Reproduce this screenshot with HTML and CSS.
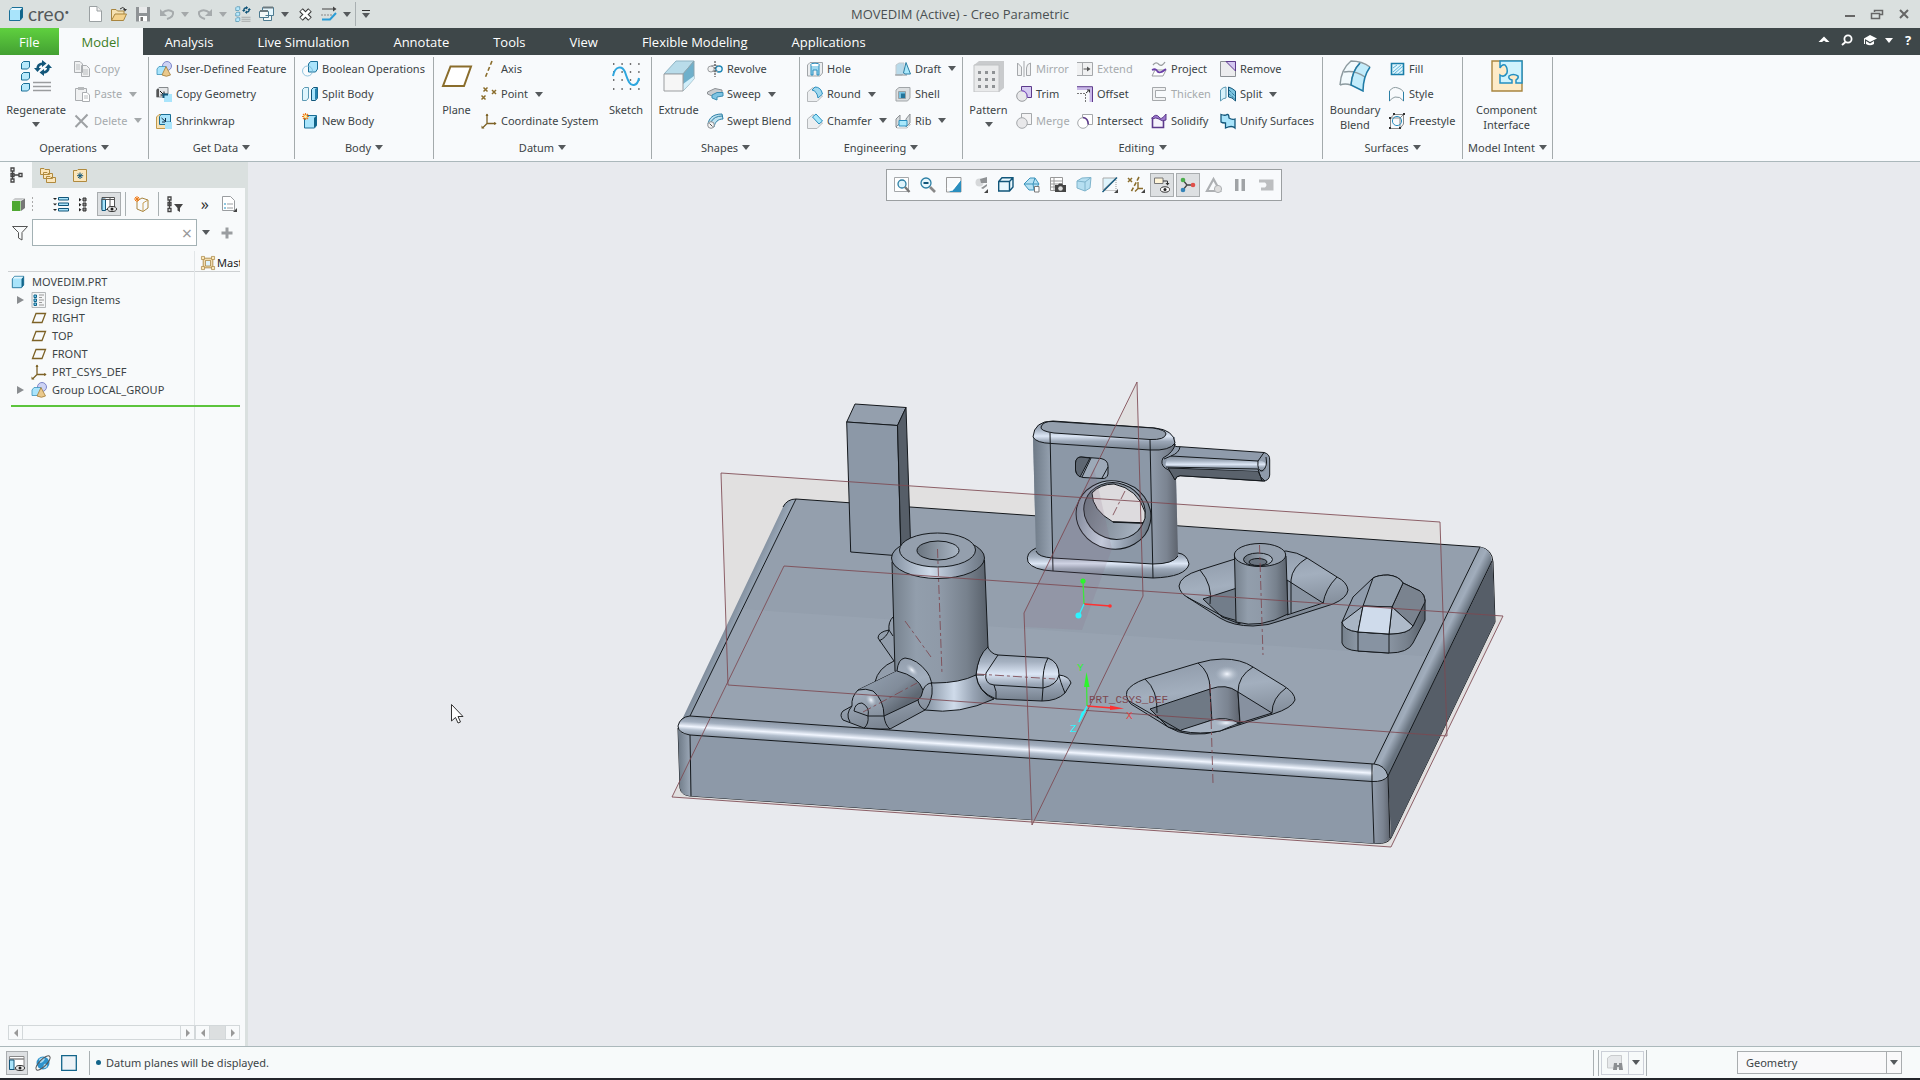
FILE: index.html
```html
<!DOCTYPE html>
<html lang="en">
<head>
<meta charset="utf-8">
<title>MOVEDIM (Active) - Creo Parametric</title>
<link rel="stylesheet" href="styles.css">
</head>
<body>
<svg class="sprite" aria-hidden="true">
  <defs>
    <linearGradient id="blue" x1="0" y1="0" x2="1" y2="1"><stop offset="0" stop-color="#f4fcff"/><stop offset="1" stop-color="#79cdf0"/></linearGradient>
    <linearGradient id="gold" x1="0" y1="0" x2="1" y2="1"><stop offset="0" stop-color="#fff3d6"/><stop offset="1" stop-color="#ecc680"/></linearGradient>
    <linearGradient id="grey" x1="0" y1="0" x2="1" y2="1"><stop offset="0" stop-color="#fafafa"/><stop offset="1" stop-color="#b4b7ba"/></linearGradient>
    <radialGradient id="ball" cx=".35" cy=".3" r=".8"><stop offset="0" stop-color="#fff"/><stop offset="1" stop-color="#5bb9e6"/></radialGradient>
  </defs>
  <symbol id="cube" viewBox="0 0 16 16"><path d="M1.500 4.500L4 1.500H14.500V11.500L12 14.500H1.500Z" fill="#a9e4fb" stroke="#1a6f97"/><path d="M12 14.500V4.500L14.500 1.500V11.500Z" fill="#12658a"/><path d="M2 4L4.200 2H14L12 4Z" fill="#e6f8ff"/></symbol>
  <symbol id="plane" viewBox="0 0 16 16"><path d="M5 3.500H14.500L11 12.500H1.500Z" fill="none" stroke="#7d6226" stroke-width="1.300"/></symbol>
  <symbol id="csys" viewBox="0 0 16 16"><path d="M6 1V10.500H15M6 10.500L1.500 15" fill="none" stroke="#7d6226" stroke-width="1.300"/><path d="M4.500 3L6 0.500L7.500 3ZM13 9L15.700 10.500L13 12ZM0.500 12.500V15.500H3.500Z" fill="#7d6226"/></symbol>
  <symbol id="group" viewBox="0 0 16 16"><circle cx="11" cy="5" r="4.500" fill="#cdd3f4" stroke="#7c86c8"/><path d="M1 8L3 5.500H10V12L8 13.500H1Z" fill="#a9e4fb" stroke="#3b93bb" stroke-width=".8"/><path d="M10 5.500L14.500 14Q10.500 16.500 6 14Z" fill="#eac98c" stroke="#a27c37" stroke-width=".8"/></symbol>
  <symbol id="regen" viewBox="0 0 32 32"><path d="M1.500 3.500L3.500 1.500H9.500V7L7.500 9H1.500ZM1.500 14.500L3.500 12.500H9.500V18L7.500 20H1.500ZM1.500 25.500L3.500 23.500H9.500V29L7.500 31H1.500Z" fill="#b8e9fc" stroke="#1a6f97"/><path d="M13 22.500H31M13 26.500H31M13 30.500H31" stroke="#9a9c9e" stroke-width="1.600"/><path d="M17.500 9Q17.500 4 23 3.500M28.500 7Q28.500 12 23 12.500" fill="none" stroke="#12567a" stroke-width="2.600"/><path d="M22 0L26.500 3.500L22 7ZM24 9L19.500 12.500L24 16ZM14 8H21L17.500 12ZM25 8H32L28.500 4Z" fill="#12567a"/></symbol>
</svg>

<header class="titlebar">
  <svg class="i" viewBox="0 0 16 16"><use href="#cube"/></svg>
  <span class="brand">creo<sup>•</sup></span>
  <nav class="quick" aria-label="Quick access">
    <button aria-label="New"><svg class="i" viewBox="0 0 16 16"><path d="M2.500 .5H10L14.500 5V15.500H2.500Z" fill="#fff" stroke="#9aa0a2"/><path d="M10 .5V5H14.500" fill="#eee" stroke="#9aa0a2"/></svg></button>
    <button aria-label="Open"><svg class="i" viewBox="0 0 16 16"><path d="M.5 14.500V3.500H5L6.500 5H13V8" fill="#f6e2b2" stroke="#a8853f"/><path d="M.5 14.500L4 8H15.500L12.500 14.500Z" fill="#f4d28c" stroke="#a8853f"/><path d="M9 3Q12 0 14 3" fill="none" stroke="#333"/><path d="M12 3H16L14 5.500Z" fill="#333"/></svg></button>
    <button aria-label="Save"><svg class="i" viewBox="0 0 16 16"><path d="M1 1H15V15.500H1Z" fill="#8f9396"/><path d="M4 1H12V7H4Z" fill="#e9eaeb"/><path d="M4 10H12V15.500H4Z" fill="#fff"/><path d="M5.500 11H8V15H5.500Z" fill="#777"/></svg></button>
    <button aria-label="Undo" disabled><svg class="i" viewBox="0 0 16 16"><path d="M3 7Q9 2 14 6Q15 11 8 13" fill="none" stroke="#a6abad" stroke-width="2"/><path d="M1 3V10H8Z" fill="#a6abad"/></svg></button>
    <button class="drop off" aria-label="Undo list"></button>
    <button aria-label="Redo" disabled><svg class="i" viewBox="0 0 16 16"><path d="M13 7Q7 2 2 6Q1 11 8 13" fill="none" stroke="#a6abad" stroke-width="2"/><path d="M15 3V10H8Z" fill="#a6abad"/></svg></button>
    <button class="drop off" aria-label="Redo list"></button>
    <button aria-label="Regenerate"><svg class="i" viewBox="0 0 32 32"><use href="#regen"/></svg></button>
    <button aria-label="Windows"><svg class="i" viewBox="0 0 16 16"><path d="M3.500 1.500H14.500V9.500H3.500Z" fill="#e4f5fc" stroke="#4c7a90"/><path d="M.5 5.500H9.500V11.500H.5ZM6.500 9.500H12.500V14.500H4.500V11.500" fill="#f3f7f8" stroke="#4c7a90"/><path d="M1 5H9M4 1.500H14" stroke="#6d7a80" stroke-width="2"/></svg></button>
    <button class="drop" aria-label="Windows list"></button>
    <button aria-label="Close window"><svg class="i" viewBox="0 0 16 16"><path d="M4 4L13 13M13 4L4 13" stroke="#333" stroke-width="5"/><path d="M4.500 4.500L12.500 12.500M12.500 4.500L4.500 12.500" stroke="#fff" stroke-width="3"/></svg></button>
    <button aria-label="Mapkeys"><svg class="i" viewBox="0 0 16 16"><path d="M1 3H14" stroke="#444"/><path d="M12 .5V5.500L15.500 3Z" fill="#444"/><path d="M0 9H11" stroke="#888" stroke-dasharray="2 1"/><path d="M1 13.500H9L15 7" fill="none" stroke="#2b9cd6" stroke-width="2"/></svg></button>
    <button class="drop" aria-label="Mapkeys list"></button>
    <span class="vbar"></span>
    <button class="drop more" aria-label="Customize"></button>
  </nav>
  <h1>MOVEDIM (Active) - Creo Parametric</h1>
  <div class="winctl">
    <button aria-label="Minimize"><svg class="i" viewBox="0 0 16 16"><path d="M3 10H13" stroke="#666" stroke-width="2"/></svg></button>
    <button aria-label="Restore"><svg class="i" viewBox="0 0 16 16"><path d="M5.500 6V4.500H13.500V8.500H10M2.500 7.500H10.500V12.500H2.500Z" fill="none" stroke="#666" stroke-width="1.500"/></svg></button>
    <button aria-label="Close"><svg class="i" viewBox="0 0 16 16"><path d="M4 4L12 12M12 4L4 12" stroke="#666" stroke-width="2"/></svg></button>
  </div>
</header>

<nav class="tabs">
  <a class="file" href="#file">File</a><a class="active" href="#model">Model</a><a href="#analysis">Analysis</a><a href="#sim">Live Simulation</a><a href="#annotate">Annotate</a><a href="#tools">Tools</a><a href="#view">View</a><a href="#flex">Flexible Modeling</a><a href="#apps">Applications</a>
  <div class="tabtools">
    <button aria-label="Collapse ribbon"><svg class="i" viewBox="0 0 16 16"><path d="M2.500 10L8 4.500L13.500 10H10L8 8.500L6 10Z" fill="#fff"/></svg></button>
    <button aria-label="Search"><svg class="i" viewBox="0 0 16 16"><circle cx="9" cy="7" r="3.600" fill="none" stroke="#fff" stroke-width="1.800"/><path d="M6.500 10L3 13" stroke="#fff" stroke-width="2"/></svg></button>
    <button aria-label="Learning"><svg class="i" viewBox="0 0 16 16"><path d="M8 3L15 6.500L8 10L2 6.500Z" fill="#fff"/><path d="M4 9V12Q8 14.500 12 12V9L8 11.500Z" fill="#fff"/><path d="M2.500 6.500V12" stroke="#fff"/></svg></button>
    <button class="drop light" aria-label="Learning list"></button>
    <button class="help" aria-label="Help">?</button>
  </div>
</nav>

<section class="ribbon">
  <div class="grp ops">
    <div class="cols">
      <button class="big"><svg viewBox="0 0 32 32"><use href="#regen"/></svg>Regenerate<i class="dd"></i></button>
      <div class="col">
        <button class="cmd" disabled><svg class="i" viewBox="0 0 16 16"><path d="M.5 .5H6L8.500 3V11.500H.5ZM7.500 4.500H12.500L15.500 7.500V15.500H7.500Z" fill="#f0f1f2" stroke="#aaadb0"/><path d="M2 4H6M2 6H6M2 8H6M9 9H14M9 11H14M9 13H14" stroke="#b9bcbe"/></svg>Copy</button>
        <button class="cmd" disabled><svg class="i" viewBox="0 0 16 16"><path d="M1.500 2.500H12.500V14.500H1.500Z" fill="#f0f1f2" stroke="#aaadb0"/><path d="M4 1H10V4H4Z" fill="#b7babc"/><path d="M8.500 6.500H13L15.500 9V15.500H8.500Z" fill="#fff" stroke="#aaadb0"/><path d="M10 10H14M10 12H14" stroke="#b9bcbe"/></svg>Paste<i class="dd"></i></button>
        <button class="cmd" disabled><svg class="i" viewBox="0 0 16 16"><path d="M1.500 2.500L13.500 14.500M13.500 1.500L1.500 14" stroke="#9ea1a4" stroke-width="2"/></svg>Delete<i class="dd"></i></button>
      </div>
    </div>
    <button class="title">Operations<i class="dd"></i></button>
  </div>
  <div class="grp get">
    <div class="cols">
      <div class="col">
        <button class="cmd"><svg class="i" viewBox="0 0 16 16"><use href="#group"/></svg>User-Defined Feature</button>
        <button class="cmd"><svg class="i" viewBox="0 0 16 16"><path d="M.5 4L3 1.500H12V8H8V11H.5Z" fill="#e4e6e8" stroke="#85898c"/><path d="M1 3V11H3V3Z" fill="#555"/><path d="M4 5L8 9M8 5.500V9H4.500" stroke="#111" fill="none"/><path d="M8 8H16V16H8Z" fill="#a9e4fb"/><path d="M7.500 12V8.500H12" fill="none" stroke="#12567a" stroke-width="2"/></svg>Copy Geometry</button>
        <button class="cmd"><svg class="i" viewBox="0 0 16 16"><path d="M.5 4L3 1.500H12V15.500H.5Z" fill="#f8e2b4" stroke="#c29a4c"/><path d="M3.500 3.500L5 1.500H14.500V9H10V11.500H3.500Z" fill="#a9e4fb" stroke="#1a6f97"/><path d="M5.500 5L9.500 8.500M9.500 5V9H6" fill="none" stroke="#12304a"/><path d="M9 9H16V16H9Z" fill="#a9e4fb"/></svg>Shrinkwrap</button>
      </div>
    </div>
    <button class="title">Get Data<i class="dd"></i></button>
  </div>
  <div class="grp body">
    <div class="cols">
      <div class="col">
        <button class="cmd"><svg class="i" viewBox="0 0 16 16"><path d="M6.500 3L8.500 .5H15.500V8L13.500 11H6.500Z" fill="#a9e4fb" stroke="#1a6f97"/><circle cx="5.500" cy="10" r="5" fill="url(#ball)" stroke="#79b6d4" stroke-width=".8"/></svg>Boolean Operations</button>
        <button class="cmd"><svg class="i" viewBox="0 0 16 16"><path d="M.5 3.500L2.500 1.500H6.500V12L4.500 14.500H.5Z" fill="#dff5fd" stroke="#5d9ab4"/><path d="M9.500 3.500L11.500 1.500H15.500V12L13.500 14.500H9.500Z" fill="#a9e4fb" stroke="#12567a"/><path d="M13 3V14L15.500 12V1.500Z" fill="#2482ae"/></svg>Split Body</button>
        <button class="cmd"><svg class="i" viewBox="0 0 16 16"><path d="M2.500 4.500L5 2.500H14.500V12.500L12.500 15H2.500Z" fill="#a9e4fb" stroke="#1a6f97"/><path d="M12 15V5L14.500 2.500V12.500Z" fill="#12658a"/><path d="M3.500 0V7M0 3.500H7M1 1L6 6M6 1L1 6" stroke="#ef7c1a" stroke-width="1.200"/><circle cx="3.500" cy="3.500" r="1.500" fill="#fff2a0"/></svg>New Body</button>
      </div>
    </div>
    <button class="title">Body<i class="dd"></i></button>
  </div>
  <div class="grp datum">
    <div class="cols">
      <button class="big"><svg viewBox="0 0 32 32"><path d="M9.500 6.500H30L23 26H2Z" fill="#fff" stroke="#8a6d2c" stroke-width="2"/></svg>Plane</button>
      <div class="col">
        <button class="cmd"><svg class="i" viewBox="0 0 16 16"><path d="M11 0L4.500 16" stroke="#8a6d2c" stroke-width="1.600" stroke-dasharray="4 2.500"/></svg>Axis</button>
        <button class="cmd"><svg class="i" viewBox="0 0 16 16"><path d="M2.500 1.500L6.500 5.500M6.500 1.500L2.500 5.500M11 4L15 8M15 4L11 8M.5 9.500L4.500 13.500M4.500 9.500L.5 13.500" stroke="#8a6d2c" stroke-width="1.500"/></svg>Point<i class="dd"></i></button>
        <button class="cmd"><svg class="i" viewBox="0 0 16 16"><use href="#csys"/></svg>Coordinate System</button>
      </div>
      <button class="big"><svg viewBox="0 0 32 32"><path d="M3 4H30M3 12H30M3 20H30M3 29H30" stroke="#444" stroke-width="1.400" stroke-dasharray="1.400 7"/><path d="M3 16C5 6 12 5 15 12C18 21 20 26 24 25Q28 24 29 18" fill="none" stroke="#2ea6de" stroke-width="2"/></svg>Sketch</button>
    </div>
    <button class="title">Datum<i class="dd"></i></button>
  </div>
  <div class="grp shapes">
    <div class="cols">
      <button class="big"><svg viewBox="0 0 32 32"><path d="M1 14L13 1H31L20 14Z" fill="#b9dcea" stroke="#8fb4c4"/><path d="M20 14L31 1V19L20 31Z" fill="#6fb0cb" stroke="#8ba5af"/><path d="M20 24L31 16V19L20 31Z" fill="#d2effa"/><path d="M1 14H20V31H1Z" fill="#f6f6f6" stroke="#9a9da0"/></svg>Extrude</button>
      <div class="col">
        <button class="cmd"><svg class="i" viewBox="0 0 16 16"><ellipse cx="4" cy="8" rx="3.200" ry="3" fill="#f0f0f0" stroke="#9a9da0"/><ellipse cx="12" cy="8" rx="3.200" ry="3" fill="#e4f6fd" stroke="#1f86b5" stroke-width="1.300"/><path d="M4 5Q8 3 12 5M5 10Q8 12 11 10" fill="none" stroke="#9a9da0"/><path d="M8 0V16" stroke="#333" stroke-dasharray="2 1"/></svg>Revolve</button>
        <button class="cmd"><svg class="i" viewBox="0 0 16 16"><path d="M.5 6L8 2.500L15 4L15 8L9 7.500L5 10L.5 8Z" fill="#c9ccd0" stroke="#8c9094"/><path d="M5 9L10 6.500H16V10L10 11V14L5 12Z" fill="#7fc4e3" stroke="#3b8db2"/></svg>Sweep<i class="dd"></i></button>
        <button class="cmd"><svg class="i" viewBox="0 0 16 16"><path d="M1 11C2 5 6 1 15 1L16 6C11 6 8 9 7 14Z" fill="#bfe2f0" stroke="#2b7fa5"/><path d="M4 9Q7 3 15.500 3" fill="none" stroke="#2b7fa5"/><circle cx="4" cy="12" r="3.300" fill="#f5f5f5" stroke="#8c9094"/><path d="M2.500 10.500L5.500 13.500" stroke="#555"/></svg>Swept Blend</button>
      </div>
    </div>
    <button class="title">Shapes<i class="dd"></i></button>
  </div>
  <div class="grp eng">
    <div class="cols">
      <div class="col">
        <button class="cmd"><svg class="i" viewBox="0 0 16 16"><path d="M.5 4L3 1.500H15.500V12L13 15H.5Z" fill="#eceef0" stroke="#a1a5a8"/><ellipse cx="8" cy="4" rx="4.500" ry="1.800" fill="#fff" stroke="#2b8fbf"/><path d="M4 5V14H6V9H10V14H12V5" fill="#9fd8ef" stroke="#2b8fbf"/></svg>Hole</button>
        <button class="cmd"><svg class="i" viewBox="0 0 16 16"><path d="M.5 6L6 1.500L15.500 10L10 15.500H.5Z" fill="#eceef0" stroke="#b5b8bb"/><path d="M5 4Q10 5 11 12L15.500 8Q14 1 8 1Z" fill="#9fd8ef" stroke="#2b8fbf"/></svg>Round<i class="dd"></i></button>
        <button class="cmd"><svg class="i" viewBox="0 0 16 16"><path d="M.5 6L6 1.500L15.500 10L10 15.500H.5Z" fill="#eceef0" stroke="#b5b8bb"/><path d="M5.500 4L9 1L15.500 8L12 11Z" fill="#a9e8fb" stroke="#2b8fbf"/></svg>Chamfer<i class="dd"></i></button>
      </div>
      <div class="col">
        <button class="cmd"><svg class="i" viewBox="0 0 16 16"><path d="M1 4L4 2H9V12L7 14H1Z" fill="#b8daea" stroke="#c2c9cd"/><path d="M0 14H12" stroke="#8c9094"/><path d="M8.500 12L11 1.500L15.500 13H10Z" fill="#a9e8fb" stroke="#2b7fa5"/></svg>Draft<i class="dd"></i></button>
        <button class="cmd"><svg class="i" viewBox="0 0 16 16"><path d="M1 4L4 1.500H15V12L12.500 15H1Z" fill="#dcdfe1" stroke="#a1a5a8"/><path d="M3.500 5.500H10.500V12.500H3.500Z" fill="#79c3e3" stroke="#9aa0a4"/><path d="M6 7.500H10V12H6Z" fill="#23749b"/></svg>Shell</button>
        <button class="cmd"><svg class="i" viewBox="0 0 16 16"><path d="M1.500 6V15H12L15.500 11" fill="none" stroke="#888" stroke-dasharray="1 1"/><path d="M1 6L5 2V10L1 14ZM11 6L15 1V10L11 14Z" fill="#d6dadc" stroke="#8c9094"/><path d="M4 7.500H12V13H4Z" fill="#a9e8fb" stroke="#2b8fbf"/></svg>Rib<i class="dd"></i></button>
      </div>
    </div>
    <button class="title">Engineering<i class="dd"></i></button>
  </div>
  <div class="grp edit">
    <div class="cols">
      <button class="big"><svg viewBox="0 0 32 32"><path d="M1 5L6 1H31V28L26 32H1Z" fill="#c9cbcd"/><path d="M1 5H26V32H1Z" fill="#e9eaeb" stroke="#c0c2c4"/><path d="M5 11H8V14H5ZM12 11H15V14H12ZM19 11H22V14H19ZM5 18H8V21H5ZM12 18H15V21H12ZM19 18H22V21H19ZM5 25H8V28H5ZM12 25H15V28H12ZM19 25H22V28H19Z" fill="#8f9295"/></svg>Pattern<i class="dd"></i></button>
      <div class="col">
        <button class="cmd" disabled><svg class="i" viewBox="0 0 16 16"><path d="M1.500 2L5.500 6V14.500H1.500ZM14.500 2Q10.500 3 10.500 7V14.500H14.500Z" fill="#f0f1f2" stroke="#a5a8ab"/><path d="M8 0V16" stroke="#a5a8ab"/></svg>Mirror</button>
        <button class="cmd"><svg class="i" viewBox="0 0 16 16"><path d="M5.500 .5H15.500V11.500H5.500Z" fill="#d6cbf2" stroke="#5d3a8c"/><circle cx="6" cy="10" r="5.300" fill="#e8e8ea" stroke="#9a9da0"/><path d="M5.500 4.700Q11 5 11.300 11.500" fill="none" stroke="#7a3fd0"/></svg>Trim</button>
        <button class="cmd" disabled><svg class="i" viewBox="0 0 16 16"><path d="M5.500 .5H15.500V11.500H5.500Z" fill="#f4f4f5" stroke="#a5a8ab"/><circle cx="6" cy="10" r="5.300" fill="#e8e8ea" stroke="#a5a8ab"/></svg>Merge</button>
      </div>
      <div class="col">
        <button class="cmd" disabled><svg class="i" viewBox="0 0 16 16"><path d="M0 1.500H15.500V14.500H0M5.500 1.500V14.500" fill="#f0f1f2" stroke="#a5a8ab"/><path d="M6.500 8H11" stroke="#555"/><path d="M10 5.500L13.500 8L10 10.500Z" fill="#555"/></svg>Extend</button>
        <button class="cmd"><svg class="i" viewBox="0 0 16 16"><path d="M0 2.500H14V16" fill="none" stroke="#c9b8e8" stroke-width="3"/><path d="M0 .7H15.500V16" fill="none" stroke="#5d3a8c"/><path d="M0 7.500H8.500V16" fill="none" stroke="#777" stroke-dasharray="2 1"/><path d="M9 7L12.500 4M10 4H12.500V6.500" fill="none" stroke="#333"/></svg>Offset</button>
        <button class="cmd"><svg class="i" viewBox="0 0 16 16"><path d="M5.500 1.500H15.500V11.500H5.500Z" fill="#fff" stroke="#a5a8ab"/><circle cx="6" cy="10" r="5.300" fill="#fff" stroke="#a5a8ab"/><path d="M6 4.500Q11 5 11.300 11.500" fill="none" stroke="#5d3a8c" stroke-width="1.600"/></svg>Intersect</button>
      </div>
      <div class="col">
        <button class="cmd"><svg class="i" viewBox="0 0 16 16"><path d="M2 4Q5 0 8 3.500Q11 6 14 1" fill="none" stroke="#9a9da0" stroke-width="1.300"/><path d="M1 15L4 9H15L12 15Z" fill="#fff" stroke="#9a9da0"/><path d="M1 9Q5 7 6.500 10.500Q9 13 15 8" fill="none" stroke="#6b3fa8" stroke-width="1.800"/></svg>Project</button>
        <button class="cmd" disabled><svg class="i" viewBox="0 0 16 16"><path d="M14.500 1.500H1.500V14.500H14.500V11.500H4.500V4.500H14.500Z" fill="#f0f1f2" stroke="#a5a8ab"/></svg>Thicken</button>
        <button class="cmd"><svg class="i" viewBox="0 0 16 16"><path d="M1.500 4V14.500H12.500V5" fill="#f5f2fb" stroke="#5d3a8c" stroke-width="1.600"/><path d="M1 5Q5 0 8 4Q10 8 15 1V7Q11 9 8 6Q5 4 1 6Z" fill="#9a78cc" stroke="#5d3a8c"/></svg>Solidify</button>
      </div>
      <div class="col">
        <button class="cmd"><svg class="i" viewBox="0 0 16 16"><path d="M.5 .5H15.500V15.500H.5Z" fill="#ececee" stroke="#8c9094"/><path d="M6 .5H15.500V10Z" fill="#d3c6f0" stroke="#5d3a8c"/></svg>Remove</button>
        <button class="cmd"><svg class="i" viewBox="0 0 16 16"><path d="M.5 4Q3 1 6 1V12Q3 12 .5 15Z" fill="#d8f2fb" stroke="#5d9ab4"/><path d="M8.500 1Q12 2 15.500 5V15Q12 11 8.500 11Z" fill="#7cc4e0" stroke="#12567a"/><path d="M9 4L15 10M9 8L15 13" stroke="#12567a" stroke-dasharray="1 1"/></svg>Split<i class="dd"></i></button>
        <button class="cmd"><svg class="i" viewBox="0 0 16 16"><path d="M1 1.500Q5 3 7 1.500Q9 1 9 5Q12 7 15 6V15Q12 12 5.500 15V10Q2 10 1 9Z" fill="#a9e4fb" stroke="#12567a" stroke-width="1.300"/></svg>Unify Surfaces</button>
      </div>
    </div>
    <button class="title">Editing<i class="dd"></i></button>
  </div>
  <div class="grp surf">
    <div class="cols">
      <button class="big"><svg viewBox="0 0 32 32"><path d="M1 25Q2 9 12 1Q23 1 31 7Q24 17 24 31Q14 24 1 25Z" fill="#f2fafd"/><path d="M21 3L31 7Q24 17 24 31L12 25Q13 11 21 3Z" fill="#c2ecfb"/><path d="M1 25Q2 9 12 1Q23 1 31 7M12 25Q13 11 21 3M5 12Q16 10 26 17M1 25Q6 23 12 25" fill="none" stroke="#8c9a9f" stroke-width="1.500"/><path d="M31 7Q24 17 24 31L12 25Q13 11 21 3" fill="none" stroke="#1f7ba6" stroke-width="1.500"/></svg>Boundary<br>Blend</button>
      <div class="col">
        <button class="cmd"><svg class="i" viewBox="0 0 16 16"><path d="M2.500 2.500H14.500V13.500H2.500Z" fill="#dff5fd" stroke="#1a7ea9" stroke-width="1.600"/><path d="M4 11L12 4M5 13L14 5M4 7L8 4M9 13L14 9" stroke="#5cb3d8"/></svg>Fill</button>
        <button class="cmd"><svg class="i" viewBox="0 0 16 16"><path d="M.5 5Q4 0 9 2Q13 3 14.500 6V15Q11 10 6 11Q3 12 .5 15Z" fill="url(#blue)" stroke="#8c9a9f"/><path d="M.5 15V5M14.500 6V15" stroke="#2b7fa5"/></svg>Style</button>
        <button class="cmd"><svg class="i" viewBox="0 0 16 16"><path d="M1.500 5L5 1.500H14.500V11L11 15.500H1.500ZM1.500 5H11V15M11 5L14.500 1.500" fill="none" stroke="#888"/><circle cx="8" cy="8" r="4.600" fill="url(#ball)" stroke="#2b8fbf"/><path d="M0 4H2V6H0ZM4 0H6V2H4ZM14 0H16V2H14ZM0 14H2V16H0ZM10 14H12V16H10Z" fill="#333"/></svg>Freestyle</button>
      </div>
    </div>
    <button class="title">Surfaces<i class="dd"></i></button>
  </div>
  <div class="grp intent">
    <div class="cols">
      <button class="big"><svg viewBox="0 0 32 32"><path d="M1 1H31V31H1Z" fill="#fdebc8" stroke="#a8853f" stroke-width="1.400"/><path d="M9 1H31V23H25V20Q28 18 27 16Q22 13 18 16Q17 19 21 20V23H9V15Q13 18 16 13Q17 8 14 5Q11 4 9 8Z" fill="#d0f3fd" stroke="#2390c2" stroke-width="1.500"/></svg>Component<br>Interface</button>
    </div>
    <button class="title">Model Intent<i class="dd"></i></button>
  </div>
</section>

<main class="work">
  <aside class="side">
    <div class="sidetabs">
      <button class="on" aria-label="Model tree"><svg class="i" viewBox="0 0 16 16"><path d="M3 1H6V4H3ZM3 6.500H6V9.500H3ZM3 12H6V15H3ZM11 6.500H14V9.500H11ZM4.500 4V12M6 8H11" fill="none" stroke="#444" stroke-width="1.300"/></svg></button>
      <button aria-label="Folder browser"><svg class="i" viewBox="0 0 16 16"><path d="M.5 1.500H4L5 2.500H9.500V7.500H.5ZM3.500 5.500H7L8 6.500H12.500V11.500H3.500ZM6.500 9.500H10L11 10.500H15.500V15.500H6.500Z" fill="#fbe6bb" stroke="#b08a3e"/></svg></button>
      <button aria-label="Favorites"><svg class="i" viewBox="0 0 16 16"><path d="M1.500 3.500H5L6 2.500H14.500V14.500H1.500Z" fill="#fbe6bb" stroke="#b08a3e"/><path d="M8 5.500V12M5 8.700H11.200M6 6.500L10.200 11M10.200 6.500L6 11" stroke="#12567a"/></svg></button>
    </div>
    <div class="sidebar-tools">
      <button aria-label="Show"><svg class="i" viewBox="0 0 16 16"><path d="M2 5H10.500V15H2Z" fill="#4fa832"/><path d="M2 4.500L5 2H15L11 4.500Z" fill="#c9cbcc"/><path d="M11 5L15 2.500V12L11 15Z" fill="#777"/></svg></button>
      <span class="grip"></span>
      <button aria-label="Expand"><svg class="i" viewBox="0 0 16 16"><path d="M5.500 1.500H15.500V4H5.500ZM5.500 7H15.500V9.500H5.500ZM5.500 12.500H15.500V15H5.500Z" fill="#a9e4fb" stroke="#12567a"/><path d="M0 2H4L2 4ZM0 7.500H4L2 9.500ZM0 13H4L2 15Z" fill="#222"/></svg></button>
      <button aria-label="Collapse"><svg class="i" viewBox="0 0 16 16"><path d="M8 2H11V5H8ZM8 7H11V10H8ZM8 12H11V15H8Z" fill="#888" stroke="#333"/><path d="M4 2V5.500L6.500 3.700ZM4 7V10.500L6.500 8.700ZM4 12V15.500L6.500 13.700Z" fill="#222"/></svg></button>
      <button class="pressed" aria-label="Tree columns"><svg class="i" viewBox="0 0 16 16"><path d="M1 1.500H13.500V13.500H1Z" fill="#fff" stroke="#555"/><path d="M1 3H4.500V14.500H1Z" fill="#a9e4fb" stroke="#12567a"/><path d="M9 2V12M1 3.500H13" stroke="#555"/><ellipse cx="11" cy="13" rx="4.500" ry="2.500" fill="#eee" stroke="#333"/><circle cx="11" cy="13" r="1.500" fill="#222"/></svg></button>
      <span class="vbar"></span>
      <button aria-label="Settings"><svg class="i" viewBox="0 0 16 16"><path d="M3 5L8 2L14 4V12L9 15.500L3 13Z" fill="url(#gold)" stroke="#a8853f"/><path d="M9 7V15M9 7L14 4" stroke="#c89f55"/><path d="M3 0V6M0 3H6M1 1L5 5M5 1L1 5" stroke="#ef7c1a"/></svg></button>
      <span class="vbar"></span>
      <button aria-label="Tree filter"><svg class="i" viewBox="0 0 16 16"><path d="M1 1H4V4H1ZM1 6.500H4V9.500H1ZM1 12.500H4V15.500H1ZM2.500 4V12.500" fill="none" stroke="#444" stroke-width="1.300"/><path d="M7 8H16L13 12V16L10.500 14.500V12Z" fill="#444"/></svg></button>
      <button class="chev" aria-label="More">»</button>
      <button aria-label="Details"><svg class="i" viewBox="0 0 16 16"><path d="M1.500 .5H9.500L13.500 4.500V14.500H1.500Z" fill="#fff" stroke="#9a9da0"/><path d="M3 7H5V9H3ZM3 11H5V13H3Z" fill="#8fc7e0"/><path d="M6 8H12M6 12H12" stroke="#9a9da0"/><path d="M12 16H16V12Z" fill="#444"/></svg></button>
    </div>
    <div class="filter">
      <svg class="i" viewBox="0 0 16 16"><path d="M.5 1.500H15.500L10 7.500V15L6.500 13V7.500Z" fill="url(#grey)" stroke="#555"/></svg>
      <label class="search"><input type="text" aria-label="Filter tree"><span>×</span></label>
      <button class="drop" aria-label="Filter options"></button>
      <button aria-label="Add"><svg class="i" viewBox="0 0 16 16"><path d="M8 2.500V13.500M2.500 8H13.500" stroke="#9a9da0" stroke-width="3"/></svg></button>
    </div>
    <div class="tree">
      <div class="names">
        <div class="thead"></div>
        <ul>
          <li class="root"><svg class="i" viewBox="0 0 16 16"><use href="#cube"/></svg>MOVEDIM.PRT</li>
          <li><i class="tw"></i><svg class="i" viewBox="0 0 16 16"><path d="M1 0.500H14.500V15.500H1Z" fill="#f3f5f6" stroke="#b3b7b9"/><path d="M3 3H5.500V5.500H3ZM3 7H5.500V9.500H3ZM3 11H5.500V13.500H3Z" fill="#79cdf0" stroke="#12658a"/><path d="M8 3H13M8 5.500H11M8 8H13M8 10.500H11M8 13H13" stroke="#999"/></svg>Design Items</li>
          <li><i class="tw none"></i><svg class="i" viewBox="0 0 16 16"><use href="#plane"/></svg>RIGHT</li>
          <li><i class="tw none"></i><svg class="i" viewBox="0 0 16 16"><use href="#plane"/></svg>TOP</li>
          <li><i class="tw none"></i><svg class="i" viewBox="0 0 16 16"><use href="#plane"/></svg>FRONT</li>
          <li><i class="tw none"></i><svg class="i" viewBox="0 0 16 16"><use href="#csys"/></svg>PRT_CSYS_DEF</li>
          <li><i class="tw"></i><svg class="i" viewBox="0 0 16 16"><use href="#group"/></svg>Group LOCAL_GROUP</li>
        </ul>
        <div class="insert"></div>
      </div>
      <div class="extra">
        <div class="thead"><svg class="i" viewBox="0 0 16 16"><path d="M2.500 2.500H13.500V13.500H2.500Z" fill="#fbe6bb" stroke="#a8853f"/><path d="M5 5H11V11.500H5Z" fill="#dff4fc" stroke="#a8853f"/><path d="M.5 .5H4V4H.5ZM12 .5H15.500V4H12ZM.5 12H4V15.500H.5ZM12 12H15.500V15.500H12Z" fill="#fbe6bb" stroke="#a8853f" stroke-width=".8"/></svg>Master</div>
      </div>
    </div>
    <div class="scrolls">
      <div class="sb wide"><i class="l"></i><i class="r"></i></div>
      <div class="sb"><i class="l"></i><b></b><i class="r"></i></div>
    </div>
  </aside>

  <section class="view">
    <svg class="canvas" viewBox="248 162 1672 884" role="img" aria-label="MOVEDIM part">
      <defs>
        <linearGradient id="rim" gradientUnits="userSpaceOnUse" x1="690" y1="716" x2="688.700" y2="735"><stop offset="0" stop-color="#8995a4"/><stop offset=".3" stop-color="#a3afbf"/><stop offset=".55" stop-color="#f1f6ff"/><stop offset=".72" stop-color="#b4c0cf"/><stop offset="1" stop-color="#8b97a6"/></linearGradient>
        <linearGradient id="rrim" gradientUnits="userSpaceOnUse" x1="1427" y1="655" x2="1441" y2="662"><stop offset="0" stop-color="#98a4b2"/><stop offset=".4" stop-color="#a1adbc"/><stop offset="1" stop-color="#68737f"/></linearGradient>
        <linearGradient id="lrim" gradientUnits="userSpaceOnUse" x1="731" y1="612" x2="742" y2="617"><stop offset="0" stop-color="#7e8b9a"/><stop offset="1" stop-color="#9dabbb"/></linearGradient>
        <linearGradient id="cyl"><stop offset="0" stop-color="#76818d"/><stop offset=".25" stop-color="#929eac"/><stop offset=".5" stop-color="#8f9aa8"/><stop offset=".78" stop-color="#77818d"/><stop offset="1" stop-color="#575f69"/></linearGradient>
        <linearGradient id="cham"><stop offset="0" stop-color="#8390a0"/><stop offset=".42" stop-color="#cfdbea"/><stop offset=".7" stop-color="#98a4b4"/><stop offset="1" stop-color="#6b7581"/></linearGradient>
        <linearGradient id="bore"><stop offset="0" stop-color="#6b7580"/><stop offset="1" stop-color="#aab6c4"/></linearGradient>
        <linearGradient id="arm" x1="0" y1="0" x2="0" y2="1"><stop offset="0" stop-color="#808b99"/><stop offset=".3" stop-color="#a5b1c1"/><stop offset=".52" stop-color="#dde7f6"/><stop offset=".7" stop-color="#9ba7b7"/><stop offset="1" stop-color="#75808d"/></linearGradient>
        <linearGradient id="leg" gradientUnits="userSpaceOnUse" x1="878" y1="680" x2="900" y2="708"><stop offset="0" stop-color="#8b97a6"/><stop offset=".5" stop-color="#818c9a"/><stop offset="1" stop-color="#5f6873"/></linearGradient>
        <linearGradient id="edgeL"><stop offset="0" stop-color="#6d7986"/><stop offset="1" stop-color="#9aa6b5"/></linearGradient>
        <linearGradient id="edgeR"><stop offset="0" stop-color="#919cab"/><stop offset=".6" stop-color="#7b8491"/><stop offset="1" stop-color="#5d636d"/></linearGradient>
        <linearGradient id="wall" x1="0" y1="0" x2=".3" y2="1"><stop offset="0" stop-color="#8a95a4"/><stop offset=".5" stop-color="#a3afbe"/><stop offset="1" stop-color="#7c8693"/></linearGradient>
        <radialGradient id="glow"><stop offset="0" stop-color="#f4f8ff"/><stop offset="1" stop-color="#b0bccb" stop-opacity="0"/></radialGradient>
      </defs>

      <!-- datum plane fills behind the part -->
      <g fill="#c9bba8" fill-opacity=".2">
        <path d="M721 473L1440 522L1447 736L728 685Z"/><path d="M784 566L1503 616L1391 847L672 797Z"/><path d="M1137 382L1143 596L1032 825L1024 613Z"/>
      </g>

      <g stroke="#14181c" stroke-width="1" stroke-linejoin="round">
        <!-- base plate -->
        <path stroke="none" fill="#949fad" d="M690 716L796 499L1480 547L1374 764Z"/>
        <path stroke="none" fill="#98a4b2" d="M690 716L741 609L1436 657L1374 764Z" fill-opacity=".8"/>
        <path stroke="none" fill="url(#lrim)" d="M678 728L783 507Q787 499 796 499L690 716Q681 717 678 728Z"/>
        <path fill="none" d="M783 507Q787 499 796 499L1480 547Q1492 549 1493 562L1495 622L1391 838Q1388 844 1376 843.500L690 796Q681 795 680 788L678 728"/>
        <path stroke="none" fill="url(#rim)" d="M690 716L1374 764L1372 781.500L690 735Q678 733 678 726Q680 717 690 716Z"/>
        <path stroke="none" fill="#8d99a8" d="M690 735L1372 781.500L1374 843.500L690 796Z"/>
        <path stroke="none" fill="url(#edgeL)" d="M678 728Q681 735 690 735V796Q681 795 680 788Z"/>
        <path stroke="none" fill="url(#rrim)" d="M1374 764L1480 547Q1491 549 1492 562L1388 777Q1384 765 1374 764Z"/>
        <path stroke="none" fill="#565e68" d="M1388 776L1492.500 561L1495 622L1391 838Z"/>
        <path stroke="none" fill="url(#edgeR)" d="M1372 781.500Q1384 782 1388 776L1390.500 838Q1387 844 1374 843.500Z"/>
        <path stroke="none" fill="#a3afbe" d="M1374 764Q1385 765 1388 776Q1384 782 1372 781.500Z"/>
        <path fill="none" d="M690 716L796 499M690 716L1374 764L1480 547M1374 764Q1385 765 1388 776L1492 561M1388 776Q1384 782 1372 781.500L690 735Q678 733 678 726Q680 717 690 716M690 735L691 796M1372 781.500V764M1372 781.500L1374 843M1388 776L1390 838"/>

        <!-- square post -->
        <path fill="#949fad" d="M855 404L906 407.500L897.500 425.500L846.700 422Z"/>
        <path fill="#8c98a7" d="M846.700 422L897.500 425.500L901 556L850.700 552Z"/>
        <path fill="#565e68" d="M906 407.500L910.500 542L901 552L897.500 425.500Z"/>

        <!-- bracket -->
        <path fill="url(#arm)" d="M1036 548Q1025 553 1028 562Q1033 570 1053 571L1153 578Q1186 577 1189 564Q1187 554 1178 553Z"/>
        <path stroke="none" fill="#8c98a7" d="M1033 437H1175L1178 556Q1173 564 1153 564L1053 558Q1038 557 1036 551Z"/>
        <path stroke="none" fill="url(#edgeL)" d="M1033 437L1050 443L1053 558Q1038 557 1036 551Z"/>
        <path stroke="none" fill="url(#edgeR)" d="M1150 449L1175 440L1178 556Q1173 564 1153 564Z"/>
        <path fill="url(#arm)" d="M1033 437Q1034 421 1053 421L1155 428Q1174 430 1175 443Q1170 451 1150 450L1052 443.500Q1036 443 1033 437Z"/>
        <path fill="#949fad" d="M1053 421.500L1153 428Q1166 430 1166 434Q1165 440 1150 439.500L1054 433Q1040 431 1041 427Q1043 421 1053 421.500Z"/>
        <path fill="none" d="M1036 551Q1038 557 1053 558L1153 564Q1173 564 1178 556M1050 433L1053 571M1150 440L1153 578"/>
        <path fill="#9da9b8" d="M1081 457L1101 458.500Q1108 460 1108 466V474Q1107 479 1102 478.500L1083 477.500Q1076 476 1075.500 470V463Q1076 457 1081 457Z"/>
        <path fill="#5e6772" d="M1081 457L1090 458L1080 477Q1076 475 1075.500 470V463Q1076 457 1081 457Z"/>
        <path fill="none" d="M1091 458L1082 477M1108 467L1102 478"/>
        <ellipse cx="1113.500" cy="515" rx="37.500" ry="34" transform="rotate(12 1113.500 515)" fill="url(#cham)"/>
        <ellipse cx="1114.500" cy="511" rx="31" ry="28" transform="rotate(20 1114.500 511)" fill="url(#bore)"/>
        <path fill="#dddbde" d="M1092 493Q1100 484 1114 484Q1138 489 1145 512Q1146 519 1143 523L1113 522Q1092 510 1092 493Z"/>
        <path fill="none" stroke-width="1.500" d="M1113 522L1143 523"/>

        <!-- handle -->
        <path fill="#8f9bab" d="M1175 444Q1173 447 1180 446.700L1264 452.500Q1270 454 1269.700 460V475Q1269 481 1263 481L1180 475.700Q1176 476 1175 480Q1172 471 1165 468Q1160 464 1163 458Q1174 452 1175 444Z"/>
        <path fill="#5a626c" d="M1168 468L1258 471Q1260 478 1265 481L1180 475.700Q1176 476 1175 480Z"/>
        <path stroke="none" fill="url(#arm)" d="M1171 456L1262 461Q1267 462 1267 469Q1263 474 1257 471L1166 467Q1164 461 1171 456Z"/>
        <path fill="none" d="M1171 456L1258 461Q1257 471 1262 471Q1268 468 1266 457M1258 461L1264 452.500M1166 467L1258 469M1164 459L1171 456Q1179 453 1180 447M1258 469L1262 481"/>

        <!-- boss and its legs -->
        <path fill="#929dab" d="M893 617Q888 622 889 630Q878 632 878 638L894 661Q878 668 875 682L900 690L925 660Z"/>
        <path fill="none" d="M889 630Q887 637 879 641M889 630L893 636"/>
        <path fill="url(#arm)" d="M987 645Q990 654 998 655L1048 658Q1059 662 1059 675Q1069 676 1071 683L1065 693Q1057 701 1042 701L996 699Q978 692 976 675Q977 658 987 645Z"/>
        <path fill="url(#cham)" d="M994 699Q978 692 976 675L932 682L925 710Q960 715 994 699Z"/>
        <path fill="url(#cyl)" d="M892 562L895 671Q912 683 934 683Q960 683 976 675Q978 655 988 647L984.500 560Z"/>
        <ellipse cx="938" cy="558" rx="46.500" ry="20.500" fill="url(#cham)"/>
        <ellipse cx="937.500" cy="550" rx="38" ry="17" fill="#949fad"/>
        <ellipse cx="938" cy="550.500" rx="21" ry="9.500" fill="url(#bore)"/>
        <path fill="none" d="M998 655L986 673Q984 684 994 685L1043 688Q1057 685 1059 675M1048 658Q1042 668 1043 688L1042 701M994 685Q997 691 996 699M1059 675Q1060 681 1065 693M976 675H984"/>
        <path fill="url(#wall)" d="M897 671Q898 659 905 658Q917 659 927 672Q933 680 932 694Q930 705 925 710L890 729H880L864 728L843 720Q839 715 843 711L852 706Q851 697 858 690Z"/>
        <path stroke="none" fill="url(#leg)" d="M897 671Q918 676 923 690Q922 697 918 700L884 716Q884 700 873 691Q866 688 858 690Z"/>
        <path fill="none" d="M897 671Q918 676 923 690Q922 697 918 700L884 716Q884 700 873 691Q866 688 858 690M884 716Q885 725 890 729M884 716L868 716L854 711Q855 703 862 703Q870 707 868 716Q869 724 864 728M852 706Q845 714 850 722M918 700Q919 707 925 710M923 690Q926 683 932 683"/>
        <ellipse cx="912" cy="670" rx="8" ry="4" transform="rotate(45 912 670)" fill="url(#glow)" stroke="none"/>
        <ellipse cx="871" cy="700" rx="7" ry="5" transform="rotate(60 871 700)" fill="url(#glow)" stroke="none"/>

        <!-- pocket with pin -->
        <path fill="url(#wall)" d="M1235 559L1200 570Q1180 576 1179 586Q1180 593 1187 597L1220 618Q1233 626 1253 626Q1268 626 1283 620L1333 604Q1347 598 1348 590Q1347 582 1337 577L1307 558Q1297 552 1286 551Z"/>
        <path fill="#727d8a" d="M1203 599L1240 587V624L1222 617Z"/>
        <path fill="#8994a2" d="M1287 580L1323 603L1287 615Z"/>
        <path fill="none" d="M1200 570Q1213 585 1210 604M1187 597L1224 617L1245 623M1307 558Q1292 567 1291 580V613M1337 577Q1325 589 1323 604"/>
        <path fill="url(#cyl)" d="M1234.500 556L1236 622Q1260 629 1288 614L1286 556Z"/>
        <ellipse cx="1260" cy="555" rx="25.700" ry="11.500" fill="#949fad"/>
        <ellipse cx="1258" cy="559.500" rx="14.500" ry="6.500" fill="url(#bore)"/>
        <ellipse cx="1258" cy="562" rx="9" ry="3.500" fill="#6a7480"/>

        <!-- open pocket -->
        <path fill="url(#wall)" d="M1145 679L1198 663Q1211 659 1223 659Q1241 659 1253 667L1284 686Q1295 693 1295 700Q1292 708 1273 714L1220 731Q1205 735 1190 734Q1178 733 1168 727L1131 704Q1125 698 1127 691Q1131 684 1145 679Z"/>
        <path fill="#6f7985" d="M1150 709L1210 689L1212 720L1181 731L1168 727Z"/>
        <path fill="url(#edgeR)" d="M1210 689Q1226 683 1238 692L1240 724L1212 722Z"/>
        <path fill="#8791a0" d="M1238 692L1272 713L1240 723Z"/>
        <path fill="#a7b3c2" d="M1181 730L1212 720Q1226 716 1239 723L1220 731Q1200 735 1181 731Z"/>
        <path fill="none" d="M1198 663Q1210 672 1210 689M1253 667Q1238 676 1238 692M1145 679Q1158 690 1157 713M1286 688Q1272 698 1272 713M1129 701L1181 731"/>
        <ellipse cx="1227" cy="674" rx="12" ry="8" fill="url(#glow)" stroke="none"/>
        <ellipse cx="1226" cy="723" rx="12" ry="4" fill="url(#glow)" stroke="none"/>

        <!-- faceted knob -->
        <path fill="url(#cyl)" d="M1342 622V643Q1344 650 1358 651L1389 653Q1408 653 1413 643L1425 620V600L1400 610Z"/>
        <path fill="#8793a2" d="M1358 632L1389 634V653L1358 651Z"/>
        <path fill="#8f9bab" d="M1373 578L1353 597L1342 622Q1343 630 1358 632L1389 634Q1409 634 1413 626L1425 600Q1425 595 1420 591L1403 583Q1399 576 1388 575Q1378 575 1373 578Z"/>
        <path fill="#7a838f" d="M1403 583L1420 591Q1425 595 1425 602L1413 626L1392 607Z"/>
        <path fill="#939fad" d="M1373 578Q1378 575 1388 575Q1399 576 1403 583L1392 607L1363 606Z"/>
        <path fill="#a9b5c4" d="M1363 606L1342 622Q1343 630 1358 632Z"/>
        <path fill="#aebac9" d="M1392 607L1413 626Q1409 634 1389 634Z"/>
        <path fill="#cfdbeb" d="M1363 606L1392 607L1389 634L1358 632Z"/>
      </g>

      <path fill="#8a6c80" fill-opacity=".16" d="M1024 613L1094 468L1112 549L1082 630L1025 627Z"/>
      <g fill="none" stroke="#7c4850" stroke-opacity=".85">
        <path d="M721 473L1440 522L1447 736L728 685Z"/><path d="M784 566L1503 616L1391 847L672 797Z"/><path d="M1137 382L1143 596L1032 825L1024 613Z"/>
        <path stroke-dasharray="9 3 3 3" d="M937.500 549L942 674M905 621L931 657M1259.500 545L1263 655M1210 684L1213 783M977 674L1055 679M863 712L917 683M1125 491L1112 517"/>
      </g>

      <g stroke-width="1.300">
        <path d="M1084 604L1083 581" stroke="#3de63d"/><circle cx="1083" cy="581" r="2.600" fill="#2cf52c"/>
        <path d="M1084 604L1110 606" stroke="#ff3030"/><circle cx="1110" cy="606" r="1.800" fill="#ff3030"/>
        <path d="M1084 604L1079 615" stroke="#2cf5ff"/><circle cx="1078.500" cy="615.500" r="3" fill="#2cf5ff"/>
        <path d="M1087 706L1086.500 680" stroke="#3de63d"/><path d="M1086.500 672L1084 687H1089.500Z" fill="#2cf52c"/>
        <path d="M1087 706L1112 708" stroke="#ff3030"/><path d="M1124 708.500L1110 705.500V710Z" fill="#ff3030"/>
        <path d="M1087 706L1079 722" stroke="#2cf5ff"/><path d="M1086 709L1079 722L1082 713Z" fill="#2cf5ff" stroke="#2cf5ff"/>
      </g>
      <g class="note"><text x="1089" y="703" fill="#7c4850">PRT_CSYS_DEF</text><text x="1077" y="671" fill="#2cf52c">Y</text><text x="1126" y="719" fill="#e04848">X</text><text x="1070" y="732" fill="#2cf5ff">Z</text></g>
      <path d="M451.500 704.500V721L455.500 717.500L458 723L460.500 722L458 716.500H463Z" fill="#fff" stroke="#333"/>
    </svg>

    <div class="viewtools">
      <button aria-label="Refit"><svg class="i" viewBox="0 0 16 16"><path d="M.5 .5H14.500V14.500H.5Z" fill="#fff" stroke="#a5a8ab"/><circle cx="8" cy="7" r="4" fill="#dff4fc" stroke="#2b7fa5" stroke-width="1.300"/><path d="M11 10L15.500 15" stroke="#777" stroke-width="2.400"/></svg></button>
      <button aria-label="Zoom out"><svg class="i" viewBox="0 0 16 16"><circle cx="6" cy="6" r="5" fill="#e8f7fd" stroke="#2b7fa5" stroke-width="1.300"/><path d="M3.500 6H8.500" stroke="#12567a" stroke-width="2"/><path d="M10 10L15 15" stroke="#888" stroke-width="2.600"/></svg></button>
      <button aria-label="Repaint"><svg class="i" viewBox="0 0 16 16"><path d="M.5 .5H15V15H.5Z" fill="url(#blue)" stroke="#999"/><path d="M15 3L15 15H3L8 12Z" fill="#2b8fbf"/><path d="M1 11L6 13L14 3" fill="none" stroke="#fff" stroke-width="1.500"/></svg></button>
      <button aria-label="Rendering"><svg class="i" viewBox="0 0 16 16"><circle cx="5" cy="11" r="4.500" fill="url(#grey)"/><circle cx="7.500" cy="5.500" r="4" fill="#d6d8da"/><path d="M8 2L15 0V7L9 11L11 12L15 9V6L9 6Z" fill="#8f9295"/><path d="M12 16H16V12Z" fill="#444"/></svg></button>
      <button aria-label="Display style"><svg class="i" viewBox="0 0 16 16"><path d="M.7 4.500L4 .7H15V10L11.500 14H.7ZM.7 4.500H11.500V14M11.500 4.500L15 .7" fill="#e9f8fe" stroke="#12567a" stroke-width="1.400"/></svg></button>
      <button aria-label="Saved orientations"><svg class="i" viewBox="0 0 16 16"><path d="M0 7L6 1H11L15 7L11 13H5Z" fill="#b6e2f4" stroke="#3b93bb"/><path d="M0 7H15M11 1L9 7L10 13" fill="none" stroke="#3b93bb"/><path d="M10.500 9.500H15V15H10.500Z" fill="#fff" stroke="#777"/></svg></button>
      <button aria-label="View manager"><svg class="i" viewBox="0 0 16 16"><path d="M.5 .5H12.500V13.500H.5ZM4 .5V13.500M.5 4H12.500M.5 7H12.500M.5 10H12.500" fill="#fff" stroke="#999"/><path d="M5 8H8L9 6.500H12L13 8H16V15H5Z" fill="#444"/><circle cx="10.500" cy="11.500" r="2.300" fill="#ddd"/></svg></button>
      <button aria-label="Perspective"><svg class="i" viewBox="0 0 16 16"><path d="M1 4L6 1L15 .5L14 11L9 14L1 11Z" fill="#b6dff1" stroke="#7fb4cc"/><path d="M1 4L9 5L15 .5M9 5V14" fill="none" stroke="#7fb4cc"/></svg></button>
      <button aria-label="Section"><svg class="i" viewBox="0 0 16 16"><path d="M1 1H14L1 13Z" fill="#dff4fc" stroke="#aaa"/><path d="M14 3V13.500H3" fill="none" stroke="#999" stroke-dasharray="1 1"/><path d="M.5 15L15 .5" stroke="#12567a" stroke-width="1.400"/><path d="M12 16H16V12Z" fill="#444"/></svg></button>
      <button aria-label="Datum display"><svg class="i" viewBox="0 0 16 16"><path d="M0 1L4 5M4 1L0 5" stroke="#8a6d2c" stroke-width="1.500"/><path d="M11 0L3 15" stroke="#8a6d2c" stroke-width="1.600" stroke-dasharray="4 2"/><path d="M10 5V11.500H15M10 11.500L7 14.500" fill="none" stroke="#8a6d2c" stroke-width="1.400"/><path d="M13 16H17V12Z" fill="#444"/></svg></button>
      <button class="pressed" aria-label="Annotations"><svg class="i" viewBox="0 0 16 16"><path d="M.5 1H9V6.500H.5Z" fill="#fff5d8" stroke="#777"/><path d="M9 4H13.500V7" fill="none" stroke="#333"/><path d="M11.500 6H15.500L13.500 8.500Z" fill="#333"/><ellipse cx="11" cy="12.500" rx="4.500" ry="2.700" fill="#fff" stroke="#333"/><circle cx="11" cy="12.500" r="1.500" fill="#222"/></svg></button>
      <button class="pressed" aria-label="Spin center"><svg class="i" viewBox="0 0 16 16"><path d="M3 3L7 8L3 13M7 8H13" fill="none" stroke="#444" stroke-width="1.300"/><circle cx="3" cy="3" r="2.300" fill="#4cae4c"/><circle cx="13" cy="8" r="2.300" fill="#e0504a"/><circle cx="3" cy="13" r="2.300" fill="#3584b8"/></svg></button>
      <button aria-label="Simulate" disabled><svg class="i" viewBox="0 0 16 16"><path d="M7.500 2L14 14H1Z" fill="none" stroke="#adb0b3" stroke-width="2.200"/><circle cx="12" cy="12" r="3.600" fill="#ddd" stroke="#adb0b3"/></svg></button>
      <button aria-label="Pause" disabled><svg class="i" viewBox="0 0 16 16"><path d="M3 2H6.500V14H3ZM9.500 2H13V14H9.500Z" fill="#a0a3a6"/></svg></button>
      <button aria-label="Stop" disabled><svg class="i" viewBox="0 0 16 16"><path d="M1 2.500H15.500V13.500H3V10.500H7Q10 8 7 5.500H1Z" fill="#bcbec0"/></svg></button>
    </div>
  </section>
</main>

<footer class="status">
  <button class="pressed" aria-label="Navigator"><svg class="i" viewBox="0 0 16 16"><path d="M.5 1.500H15V14.500H.5Z" fill="#fff" stroke="#888"/><path d="M.5 4H15" stroke="#888" stroke-width="1.500"/><path d="M.5 5H5V14.500H.5Z" fill="#a9e4fb" stroke="#12567a"/><ellipse cx="11" cy="13" rx="4.500" ry="2.500" fill="#eee" stroke="#333"/><circle cx="11" cy="13" r="1.500" fill="#222"/></svg></button>
  <button aria-label="Browser"><svg class="i" viewBox="0 0 16 16"><circle cx="8" cy="8" r="6.500" fill="#2f93cc"/><path d="M4 4Q8 1 10 4Q8 8 5 8ZM9 9Q13 8 12 12Q10 14 8 13Z" fill="#a5d8f0"/><ellipse cx="8" cy="8" rx="9.500" ry="3.500" transform="rotate(-45 8 8)" fill="none" stroke="#555"/></svg></button>
  <button aria-label="Full screen"><svg class="i" viewBox="0 0 16 16"><path d="M.7 .7H15.300V15.300H.7Z" fill="#edf3f7" stroke="#12658a" stroke-width="1.300"/></svg></button>
  <span class="vbar"></span>
  <p><i class="dot"></i>Datum planes will be displayed.</p>
  <div class="find"><button aria-label="Find" disabled><svg class="i" viewBox="0 0 16 16"><path d="M.5 3L4 .5H14.500V13H.5Z" fill="#e6e8ea" stroke="#c9cbcd"/><path d="M7 8H10V10H12V8H15L16 15H12V12H10V15H6Z" fill="#8c8f92"/></svg></button><button aria-label="Find options"><i class="dd"></i></button></div>
  <label class="sel"><select aria-label="Selection filter"><option>Geometry</option></select><span class="arrow"><i class="dd"></i></span></label>
</footer>
</body>
</html>
```
FILE: styles.css
```css
* { box-sizing: border-box; }
html, body { height: 100%; margin: 0; }
body {
  display: flex; flex-direction: column;
  background: #f8fafc; color: #3c4446;
  font: 11px/16px "Noto Sans", "Open Sans", sans-serif;
  border-bottom: 2px solid #24262b; overflow: hidden;
}
button { border: 0; padding: 0; margin: 0; background: none; color: inherit; font: inherit; display: flex; align-items: center; justify-content: center; flex: none; }
.i { width: 16px; height: 16px; flex: none; display: block; overflow: visible; }
.sprite { display: none; }
.vbar { width: 1px; align-self: stretch; background: #a9b0b2; flex: none; }
.dd, .drop::before { content: ""; display: block; flex: none; width: 0; border: 4px solid transparent; border-top: 5px solid #55595c; border-bottom: 0; }
.drop.off::before, :disabled .dd { border-top-color: #a4a8aa; }
.drop.light::before { border-top-color: #fff; }
.pressed { background: #dde0e2; border: 1px solid #a9adaf; }

/* title bar */
.titlebar { display: flex; align-items: center; height: 28px; flex: none; padding: 0 8px; background: #dae0df; position: relative; }
.brand { font: 19px/20px Lato, sans-serif; width: 51px; margin-left: 4px; color: #54595b; white-space: nowrap; }
.brand sup { font-size: 8px; line-height: 8px; vertical-align: 6px; }
.quick { display: flex; align-items: center; gap: 8px; height: 24px; margin-left: 8px; }
.quick .drop { width: 8px; margin-left: -2px; }
.quick .vbar { margin-left: -4px; }
.more { border-top: 1px solid #333; padding-top: 2px; }
.titlebar h1 { position: absolute; inset: 0; margin: auto; width: max-content; height: 20px; font: 13px/20px "Open Sans", sans-serif; color: #4a5052; }
.winctl { margin-left: auto; display: flex; gap: 11px; }

/* tabs */
.tabs { display: flex; height: 27px; flex: none; background: #3e4749; font: 13px/28px "Open Sans", sans-serif; }
.tabs a { color: #fff; text-decoration: none; padding: 0 22px; white-space: nowrap; }
.tabs .file { background: linear-gradient(#5fd03f, #43a032); padding: 0 19px; }
.tabs .active { background: #f8fafc; color: #3c7d1f; padding: 0 23px; }
.tabtools { margin-left: auto; display: flex; gap: 7px; padding: 0 4px 3px 0; color: #fff; }
.tabtools .drop { width: 8px; }
.help { width: 16px; font-weight: 700; }

/* ribbon */
.ribbon { display: flex; height: 107px; flex: none; border-bottom: 1px solid #abb8bb; }
.grp { display: flex; flex-direction: column; flex: none; border-right: 1px solid #a4aaac; margin: 2px 0; }
.cols { display: grid; height: 79px; }
.col { display: grid; grid-template-rows: 23px 28px 25px; justify-items: start; }
.cmd { gap: 4px; white-space: nowrap; }
.cmd .dd { margin-left: 3px; }
:disabled { color: #a6aaad; }
.big { flex-direction: column; justify-content: flex-start; line-height: 15px; text-align: center; padding: 3px 2px 0 0; }
.big svg { width: 32px; height: 32px; margin-bottom: 10px; }
.big .dd { margin-top: 5px; }
.title { height: 22px; gap: 4px; margin-top: 3px; width: 100%; }
.title .dd { margin-bottom: 2px; }
.ops { width: 149px; }
.ops .cols { grid-template-columns: 74px 1fr; }
.get { width: 146px; }
.body { width: 139px; }
.get .cols, .body .cols, .eng .cols { padding-left: 7px; }
.datum { width: 218px; }
.datum .cols { grid-template-columns: 47px 125px 42px; }
.shapes { width: 148px; }
.shapes .cols { grid-template-columns: 55px 1fr; }
.eng { width: 163px; }
.eng .cols { grid-template-columns: 88px 1fr; }
.edit { width: 360px; }
.edit .cols { grid-template-columns: 53px 61px 74px 69px 1fr; }
.surf { width: 140px; }
.surf .cols { grid-template-columns: 66px 1fr; }
.intent { width: 90px; }

/* work area */
.work { display: flex; flex: 1; min-height: 0; border-bottom: 1px solid #abb8bb; }
.side { width: 248px; flex: none; display: flex; flex-direction: column; background: #f8fafb; border-right: 3px solid #dae0df; }
.sidetabs { display: flex; height: 26px; background: #dae0df; }
.sidetabs button { width: 32px; }
.sidetabs .on { background: #f8fafb; }
.sidebar-tools { display: flex; align-items: center; height: 31px; padding: 0 8px 0 10px; }
.sidebar-tools .vbar { height: 24px; align-self: center; }
.grip { width: 2px; height: 14px; margin: 0 20px 0 6px; background: repeating-linear-gradient(#aaa 0 2px, transparent 2px 4px); }
.sidebar-tools button + button { margin-left: 6px; }
.sidebar-tools .pressed { width: 24px; height: 24px; }
.sidebar-tools .pressed + .vbar { margin: 0 8px 0 4px; }
.sidebar-tools button + .vbar { margin-right: 8px; margin-left: 8px; }
.sidebar-tools .pressed + .vbar + button { margin: 0; }
.sidebar-tools .chev { margin-left: 18px; margin-right: 6px; font-size: 16px; color: #333; }
.filter { display: flex; align-items: center; height: 27px; padding-left: 12px; }
.search { display: flex; align-items: center; width: 165px; height: 27px; margin: 0 5px 0 4px; border: 1px solid #a3b1b4; background: #fff; }
.search input { flex: 1; min-width: 0; border: 0; outline: 0; background: none; }
.search span { width: 18px; text-align: center; font-size: 18px; color: #999; }
.filter .drop { width: 8px; margin-right: 9px; }
.tree { display: grid; grid-template-columns: 187px 45px; flex: 1; margin: 5px 0 0 8px; }
.names { border-right: 1px solid #e2e6e8; }
.thead { display: flex; align-items: center; gap: 2px; height: 21px; border-bottom: 1px solid #cdd0d2; overflow: hidden; }
.extra .thead { padding: 3px 0 0 6px; color: #222; }
.extra .i { width: 14px; height: 14px; }
.tree ul { list-style: none; margin: 0; padding: 1px 0 0; }
.tree li { display: flex; align-items: center; height: 18px; gap: 5px; white-space: nowrap; }
.tree .root { padding-left: 3px; gap: 7px; }
.root .i { width: 14px; height: 14px; }
.tw { border: 4px solid transparent; border-left: 7px solid #8a8d90; border-right: 0; margin: 0 2px 0 9px; }
.tw.none { border-color: transparent; }
.insert { height: 2px; margin: 6px -46px 0 3px; background: #5cc43c; }
.scrolls { display: grid; grid-template-columns: 187px 45px; padding-left: 8px; height: 21px; }
.sb { display: flex; justify-content: space-between; height: 15px; border: 1px solid #d3d8da; }
.sb i { width: 14px; display: flex; align-items: center; justify-content: center; }
.sb i::before { content: ""; border: 4px solid transparent; }
.sb .l { border-right: 1px solid #d3d8da; }
.sb .r { border-left: 1px solid #d3d8da; }
.sb .l::before { border-right: 4px solid #999; border-left: 0; }
.sb .r::before { border-left: 4px solid #999; border-right: 0; }
.sb b { flex: 1; background: #dcdfe0; }

.view { flex: 1; position: relative; display: flex; justify-content: center; align-items: flex-start; background: #e8eaee; min-width: 0; }
.canvas { position: absolute; inset: 0; width: 100%; height: 100%; }
.note { font: 11px "Liberation Mono", monospace; }
.viewtools { position: relative; display: flex; gap: 2px; margin-top: 7px; padding: 3px; border: 1px solid #9b9fa1; background: #f8fafc; }
.viewtools button { width: 24px; height: 24px; }

/* status bar */
.status { display: flex; align-items: center; height: 31px; flex: none; padding: 0 18px 0 6px; background: #f7fafa; }
.status .pressed { width: 22px; height: 24px; margin-right: 7px; }
.status > .vbar { height: 24px; align-self: center; margin: 0 6px 0 12px; }
.status button + button { margin-right: 10px; }
.status button:nth-of-type(3) { margin-right: 0; }
.status p { display: flex; align-items: center; gap: 5px; margin: 0; }
.dot { width: 5px; height: 5px; border-radius: 50%; background: #12658a; }
.find { display: flex; margin-left: auto; margin-right: 90px; height: 26px; padding: 1px 2px; border-left: 1px solid #a9b0b2; border-right: 1px solid #a9b0b2; box-shadow: -4px 0 0 #f7fafa, -5px 0 0 #a9b0b2; }
.find button { width: 28px; border: 1px solid #ccd0d8; }
.find .i { width: 16px; }
.find button + button { width: 15px; margin: 0; border-left: 0; }
.sel { display: flex; width: 165px; height: 23px; border: 1px solid #a9adaf; background: #f9f9fa; }
.sel select { flex: 1; height: 100%; appearance: none; border: 0; background: none; padding: 0 8px; font: inherit; color: inherit; }
.arrow { display: flex; align-items: center; justify-content: center; width: 15px; border-left: 1px solid #a9adaf; }
```
